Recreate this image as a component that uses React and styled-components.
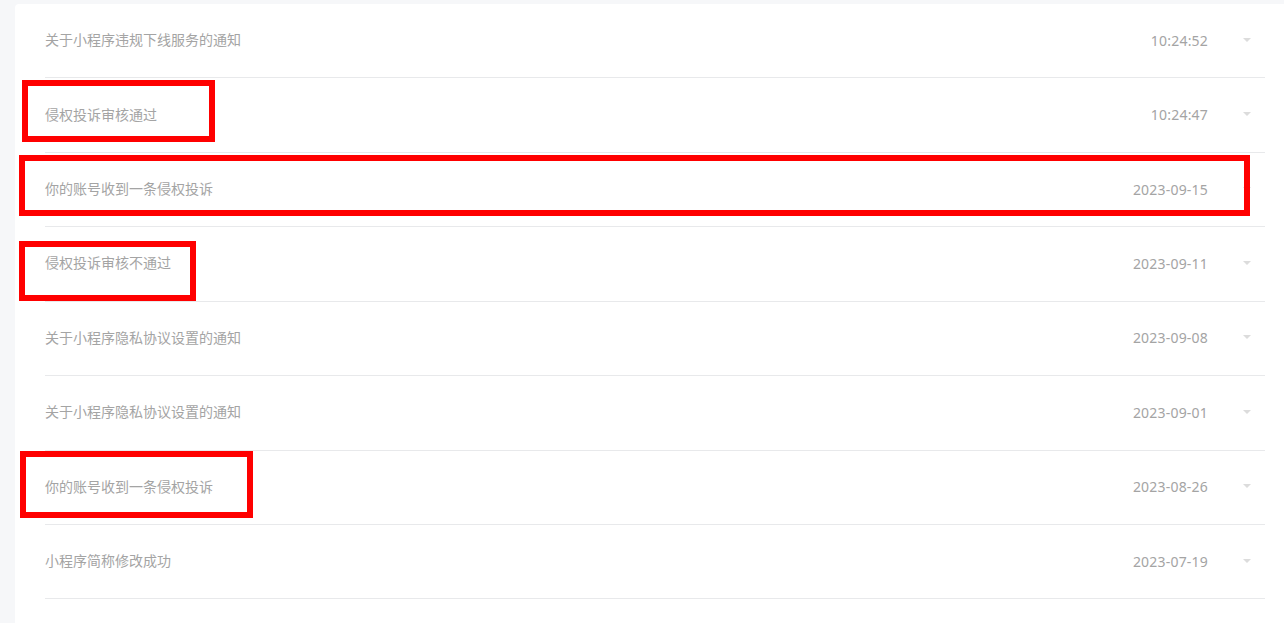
import React from "react";
import styled, { createGlobalStyle } from "styled-components";

const GlobalStyle = createGlobalStyle`
  html, body {
    margin: 0;
    padding: 0;
    background: #f6f7f9;
    font-family: "Noto Sans", "Noto Sans CJK SC", sans-serif;
  }
`;

const notices = [
  { title: "关于小程序违规下线服务的通知", time: "10:24:52" },
  { title: "侵权投诉审核通过", time: "10:24:47" },
  { title: "你的账号收到一条侵权投诉", time: "2023-09-15" },
  { title: "侵权投诉审核不通过", time: "2023-09-11" },
  { title: "关于小程序隐私协议设置的通知", time: "2023-09-08" },
  { title: "关于小程序隐私协议设置的通知", time: "2023-09-01" },
  { title: "你的账号收到一条侵权投诉", time: "2023-08-26" },
  { title: "小程序简称修改成功", time: "2023-07-19" },
];

// red annotation boxes drawn over the screenshot
const marks = [
  { left: 22, top: 80, width: 193, height: 62 },
  { left: 19, top: 155, width: 1231, height: 61 },
  { left: 19, top: 241, width: 177, height: 60 },
  { left: 20, top: 451, width: 233, height: 67 },
];

const Page = styled.div`
  position: relative;
  height: 623px;
  overflow: hidden;
  padding: 4px 0 0 15px;
  box-sizing: border-box;
`;

const Card = styled.div`
  background: #fff;
  border-radius: 4px 0 0 0;
  padding: 0 19px 40px 30px;
  min-height: 640px;
`;

const Row = styled.div`
  display: flex;
  align-items: center;
  height: 74.43px;
  box-sizing: border-box;
  border-bottom: 1px solid #e8e9eb;
`;

const Title = styled.span`
  flex: 1;
  padding-bottom: 3px;
  font-size: 14px;
  color: #a4a4a4;
  font-family: "Noto Sans CJK SC", "Noto Sans", sans-serif;
`;

const Time = styled.span`
  padding-bottom: 1px;
  font-size: 14px;
  letter-spacing: 0.2px;
  color: #a4a4a4;
  font-family: "Noto Sans", sans-serif;
`;

const Caret = styled.span`
  width: 0;
  height: 0;
  margin: 0 14px 2px 35px;
  border-left: 4px solid transparent;
  border-right: 4px solid transparent;
  border-top: 4px solid #dcdcdc;
`;

const Mark = styled.div`
  position: absolute;
  box-sizing: border-box;
  border: 6px solid #ff0000;
  pointer-events: none;
`;

export default function App() {
  return (
    <>
      <GlobalStyle />
      <Page>
        <Card>
          {notices.map((n, i) => (
            <Row key={i}>
              <Title>{n.title}</Title>
              <Time>{n.time}</Time>
              <Caret />
            </Row>
          ))}
        </Card>
        {marks.map((m, i) => (
          <Mark key={i} style={m} />
        ))}
      </Page>
    </>
  );
}
